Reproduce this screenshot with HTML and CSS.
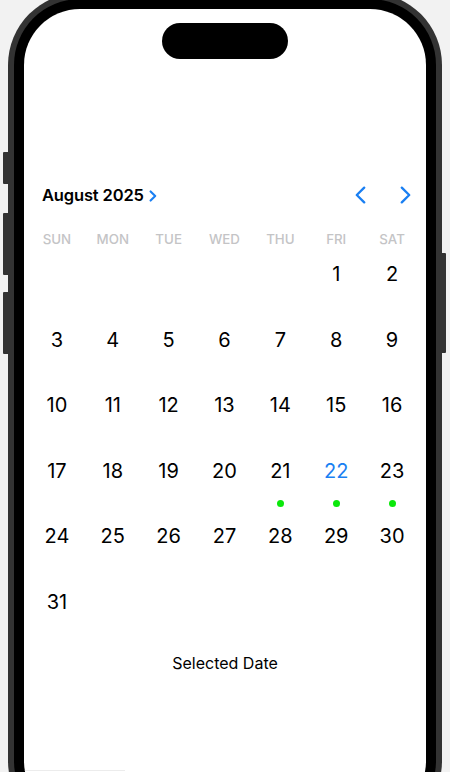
FILE: index.html
```html
<!DOCTYPE html>
<html>
<head>
<meta charset="utf-8">
<link rel="stylesheet" href="styles.css">
</head>
<body>
<div class="phone">
  <span class="btn btn-l1"></span>
  <span class="btn btn-l2"></span>
  <span class="btn btn-l3"></span>
  <span class="btn btn-r1"></span>
  <div class="bezel">
    <div class="screen">
      <div class="island"></div>
      <div class="calendar">
        <div class="header">
          <div class="month">
            <span class="month-title">August 2025</span>
            <svg class="month-chev" width="8" height="12" viewBox="0 0 8 12"><path d="M1.6 1.4 L6.2 6 L1.6 10.6" fill="none" stroke="#1a7ff2" stroke-width="2.1" stroke-linecap="round" stroke-linejoin="round"/></svg>
          </div>
          <div class="nav">
            <svg class="nav-chev" width="11" height="18" viewBox="0 0 11 18"><path d="M9.2 1.6 L1.8 9 L9.2 16.4" fill="none" stroke="#1a7ff2" stroke-width="2.3" stroke-linecap="round" stroke-linejoin="round"/></svg>
            <svg class="nav-chev" width="11" height="18" viewBox="0 0 11 18"><path d="M1.8 1.6 L9.2 9 L1.8 16.4" fill="none" stroke="#1a7ff2" stroke-width="2.3" stroke-linecap="round" stroke-linejoin="round"/></svg>
          </div>
        </div>
        <div class="weekdays">
          <span>SUN</span><span>MON</span><span>TUE</span><span>WED</span><span>THU</span><span>FRI</span><span>SAT</span>
        </div>
        <div class="days">
          <div class="day empty"></div>
          <div class="day empty"></div>
          <div class="day empty"></div>
          <div class="day empty"></div>
          <div class="day empty"></div>
          <div class="day"><span class="num">1</span></div>
          <div class="day"><span class="num">2</span></div>
          <div class="day"><span class="num">3</span></div>
          <div class="day"><span class="num">4</span></div>
          <div class="day"><span class="num">5</span></div>
          <div class="day"><span class="num">6</span></div>
          <div class="day"><span class="num">7</span></div>
          <div class="day"><span class="num">8</span></div>
          <div class="day"><span class="num">9</span></div>
          <div class="day"><span class="num">10</span></div>
          <div class="day"><span class="num">11</span></div>
          <div class="day"><span class="num">12</span></div>
          <div class="day"><span class="num">13</span></div>
          <div class="day"><span class="num">14</span></div>
          <div class="day"><span class="num">15</span></div>
          <div class="day"><span class="num">16</span></div>
          <div class="day"><span class="num">17</span></div>
          <div class="day"><span class="num">18</span></div>
          <div class="day"><span class="num">19</span></div>
          <div class="day"><span class="num">20</span></div>
          <div class="day"><span class="num">21</span><span class="dot"></span></div>
          <div class="day selected"><span class="num">22</span><span class="dot"></span></div>
          <div class="day"><span class="num">23</span><span class="dot"></span></div>
          <div class="day"><span class="num">24</span></div>
          <div class="day"><span class="num">25</span></div>
          <div class="day"><span class="num">26</span></div>
          <div class="day"><span class="num">27</span></div>
          <div class="day"><span class="num">28</span></div>
          <div class="day"><span class="num">29</span></div>
          <div class="day"><span class="num">30</span></div>
          <div class="day"><span class="num">31</span></div>
        </div>
        <div class="selected-label">Selected Date</div>
        <div class="bottom-line"></div>
      </div>
    </div>
  </div>
</div>
</body>
</html>
```

FILE: styles.css
```css
html, body {
  margin: 0;
  padding: 0;
  overflow: hidden;
  height: 772px;
  background: #f2f2f2;
  font-family: Inter, "Noto Sans", "Liberation Sans", sans-serif;
}

.phone {
  position: relative;
  margin: -7px 0 0 8px;
  width: 434px;
  height: 840px;
  box-sizing: border-box;
  padding: 6px;
  border-radius: 72px;
  background: #333333;
}

.btn {
  position: absolute;
  background: #333333;
  width: 5px;
}
.btn-l1 { left: -5px; top: 159px; height: 32px; border-radius: 1px 0 0 1px; }
.btn-l2 { left: -5px; top: 220px; height: 62px; border-radius: 1px 0 0 1px; }
.btn-l3 { left: -5px; top: 299px; height: 62px; border-radius: 1px 0 0 1px; }
.btn-r1 { right: -4px; top: 260px; height: 100px; width: 4px; border-radius: 0 1px 1px 0; }

.bezel {
  height: 100%;
  box-sizing: border-box;
  padding: 10px;
  border-radius: 66px;
  background: #000;
}

.screen {
  height: 100%;
  background: #fff;
  border-radius: 56px;
  overflow: hidden;
  padding-top: 14px;
  box-sizing: border-box;
}

.island {
  width: 126px;
  height: 36px;
  margin: 0 auto;
  border-radius: 18px;
  background: #000;
}

.calendar {
  margin-top: 124px;
}

.header {
  display: flex;
  justify-content: space-between;
  align-items: center;
  height: 24px;
  padding: 0 15px 0 18px;
}

.month {
  display: flex;
  align-items: center;
  gap: 5px;
}

.month-title {
  font-size: 16.5px;
  font-weight: 600;
  color: #000;
  letter-spacing: -0.15px;
}

.month-chev {
  display: block;
  margin-top: 1px;
}

.nav {
  display: flex;
  gap: 34px;
  align-items: center;
}

.nav-chev {
  display: block;
}

.weekdays {
  display: grid;
  grid-template-columns: repeat(7, 1fr);
  margin: 24px 6px 0 5px;
  height: 16px;
  line-height: 16px;
  text-align: center;
  font-size: 13.3px;
  font-weight: 500;
  color: #c4c4c6;
}

.days {
  display: grid;
  grid-template-columns: repeat(7, 1fr);
  grid-auto-rows: 65.6px;
  margin: 0 6px 0 5px;
}

.day {
  display: flex;
  flex-direction: column;
  align-items: center;
  padding-top: 15px;
  box-sizing: border-box;
}

.num {
  display: block;
  font-size: 20px;
  line-height: 24px;
  color: #000;
}

.selected .num {
  color: #1a7ff2;
}

.dot {
  display: block;
  width: 7px;
  height: 7px;
  margin-top: 17.5px;
  border-radius: 50%;
  background: #0be80b;
}

.selected-label {
  margin-top: 12.4px;
  text-align: center;
  font-size: 16px;
  line-height: 20px;
  color: #000;
}

.bottom-line {
  margin-top: 97px;
  width: 101px;
  height: 1px;
  background: #ececec;
}
```
